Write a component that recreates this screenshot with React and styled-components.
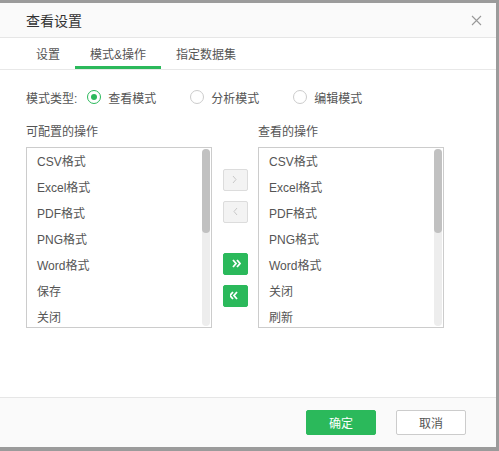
import styled, { createGlobalStyle } from "styled-components";

const GREEN = "#2bb95b";

const GlobalStyle = createGlobalStyle`
    html, body {
        margin: 0;
        padding: 0;
        background: #9b9b9b;
        font-family: "Liberation Sans", "Noto Sans CJK SC", sans-serif;
    }
    * { box-sizing: border-box; }
`;

const Page = styled.div`
    width: 499px;
    height: 451px;
    padding-top: 3px;
    overflow: hidden;
`;

const Dialog = styled.div`
    width: 496px;
    height: 444px;
    background: #fff;
    display: flex;
    flex-direction: column;
`;

const Header = styled.div`
    height: 35px;
    display: flex;
    align-items: center;
    justify-content: space-between;
    padding: 0 14px 0 26px;
    background: #fafafa;
    border-bottom: 1px solid #e6e6e6;
`;

const Title = styled.div`
    font-size: 14px;
    color: #333;
`;

const Close = styled.div`
    display: flex;
    cursor: pointer;
`;

const Tabs = styled.div`
    display: flex;
    height: 32px;
    padding-left: 21px;
    border-bottom: 1px solid #e8e8e8;
`;

const Tab = styled.div`
    padding: 0 15px;
    font-size: 12px;
    color: #555;
    display: flex;
    align-items: center;
    border-bottom: 3px solid ${(p) => (p.$active ? GREEN : "transparent")};
    padding-top: 2px;
`;

const Body = styled.div`
    flex: 1;
    padding: 17px 26px 0;
`;

const RadioRow = styled.div`
    display: flex;
    align-items: center;
    height: 20px;
    font-size: 12px;
    color: #555;
`;

const RadioLabel = styled.span`
    margin-right: 10px;
`;

const Radio = styled.label`
    display: flex;
    align-items: center;
    gap: 7px;
    width: 103px;
`;

const Circle = styled.span`
    width: 14px;
    height: 14px;
    border-radius: 50%;
    border: 1px solid ${(p) => (p.$checked ? GREEN : "#ccc")};
    display: flex;
    align-items: center;
    justify-content: center;

    &::after {
        content: "";
        width: 6px;
        height: 6px;
        border-radius: 50%;
        background: ${(p) => (p.$checked ? GREEN : "transparent")};
    }
`;

const Transfer = styled.div`
    display: flex;
    margin-top: 17px;
`;

const Column = styled.div`
    display: flex;
    flex-direction: column;
    width: 186px;
`;

const ColumnTitle = styled.div`
    font-size: 12px;
    color: #555;
    height: 16px;
    line-height: 16px;
    margin-bottom: 7px;
`;

const ListBox = styled.div`
    height: 181px;
    border: 1px solid #ccc;
    display: flex;
    padding: 1px 1px 1px 0;
`;

const Items = styled.ul`
    flex: 1;
    list-style: none;
    margin: 0;
    padding: 0;
    overflow: hidden;
`;

const Item = styled.li`
    height: 26px;
    line-height: 26px;
    padding-left: 10px;
    font-size: 12px;
    color: #555;
    white-space: nowrap;
`;

const Track = styled.div`
    width: 8px;
    background: #ededed;
    border-radius: 4px;
`;

const Thumb = styled.div`
    height: 84px;
    background: #c1c1c1;
    border-radius: 4px;
`;

const Buttons = styled.div`
    width: 46px;
    padding-top: 23px;
    display: flex;
    flex-direction: column;
    justify-content: center;
    align-items: center;
`;

const MoveButton = styled.div`
    width: 25px;
    height: 22px;
    border-radius: 2px;
    display: flex;
    align-items: center;
    justify-content: center;
    margin-top: ${(p) => p.$gap}px;
    background: ${(p) => (p.$primary ? GREEN : "#f3f3f3")};
    border: 1px solid ${(p) => (p.$primary ? GREEN : "#dcdcdc")};
`;

const Footer = styled.div`
    height: 50px;
    display: flex;
    align-items: center;
    justify-content: flex-end;
    gap: 20px;
    padding-right: 30px;
    background: #fafafa;
    border-top: 1px solid #e6e6e6;
`;

const Button = styled.button`
    width: 70px;
    height: 25px;
    border-radius: 2px;
    font-family: inherit;
    font-size: 12px;
    cursor: pointer;
    background: ${(p) => (p.$primary ? GREEN : "#fff")};
    color: ${(p) => (p.$primary ? "#fff" : "#555")};
    border: 1px solid ${(p) => (p.$primary ? GREEN : "#ccc")};
`;

const Chevron = ({ dir, color, double }) => {
    const single = dir === "right" ? "M3 2 L6 5.5 L3 9" : "M7 2 L4 5.5 L7 9";
    const second = dir === "right" ? "M7 2 L10 5.5 L7 9" : "M3 2 L0 5.5 L3 9";
    return (
        <svg width="11" height="11" viewBox="0 0 11 11" fill="none">
            <path d={single} stroke={color} strokeWidth={double ? 1.8 : 1} />
            {double && <path d={second} stroke={color} strokeWidth="1.8" />}
        </svg>
    );
};

const sourceItems = ["CSV格式", "Excel格式", "PDF格式", "PNG格式", "Word格式", "保存", "关闭"];
const targetItems = ["CSV格式", "Excel格式", "PDF格式", "PNG格式", "Word格式", "关闭", "刷新"];

const modes = [
    { label: "查看模式", checked: true },
    { label: "分析模式" },
    { label: "编辑模式" },
];

const List = ({ items }) => (
    <ListBox>
        <Items>
            {items.map((item) => (
                <Item key={item}>{item}</Item>
            ))}
        </Items>
        <Track>
            <Thumb />
        </Track>
    </ListBox>
);

const App = () => {
    return (
        <Page>
            <GlobalStyle />
            <Dialog>
                <Header>
                    <Title>查看设置</Title>
                    <Close>
                        <svg width="11" height="11" viewBox="0 0 11 11">
                            <path d="M1 1 L10 10 M10 1 L1 10" stroke="#999" strokeWidth="1.1" />
                        </svg>
                    </Close>
                </Header>

                <Tabs>
                    <Tab>设置</Tab>
                    <Tab $active>模式&amp;操作</Tab>
                    <Tab>指定数据集</Tab>
                </Tabs>

                <Body>
                    <RadioRow>
                        <RadioLabel>模式类型:</RadioLabel>
                        {modes.map((m) => (
                            <Radio key={m.label}>
                                <Circle $checked={m.checked} />
                                {m.label}
                            </Radio>
                        ))}
                    </RadioRow>

                    <Transfer>
                        <Column>
                            <ColumnTitle>可配置的操作</ColumnTitle>
                            <List items={sourceItems} />
                        </Column>

                        <Buttons>
                            <MoveButton $gap={0}>
                                <Chevron dir="right" color="#c8c8c8" />
                            </MoveButton>
                            <MoveButton $gap={10}>
                                <Chevron dir="left" color="#c8c8c8" />
                            </MoveButton>
                            <MoveButton $gap={30} $primary>
                                <Chevron dir="right" color="#fff" double />
                            </MoveButton>
                            <MoveButton $gap={10} $primary>
                                <Chevron dir="left" color="#fff" double />
                            </MoveButton>
                        </Buttons>

                        <Column>
                            <ColumnTitle>查看的操作</ColumnTitle>
                            <List items={targetItems} />
                        </Column>
                    </Transfer>
                </Body>

                <Footer>
                    <Button $primary>确定</Button>
                    <Button>取消</Button>
                </Footer>
            </Dialog>
        </Page>
    );
};

export default App;
